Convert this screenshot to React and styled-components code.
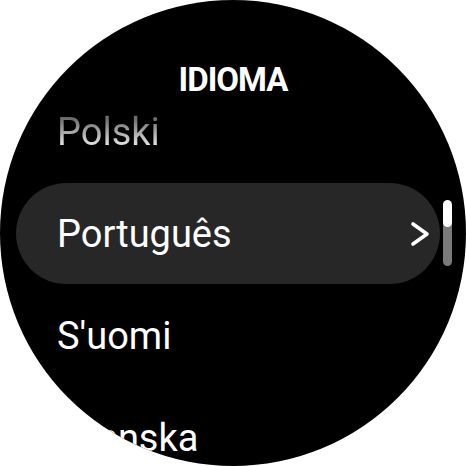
import React from 'react';
import styled, { createGlobalStyle } from 'styled-components';

const GlobalStyle = createGlobalStyle`
  html, body {
    margin: 0;
    padding: 0;
    background: #ffffff;
  }
  body {
    font-family: Roboto, "Noto Sans", "Liberation Sans", sans-serif;
  }
`;

const Watch = styled.div`
  position: relative;
  width: 466px;
  height: 466px;
  border-radius: 50%;
  background: #000;
  overflow: hidden;
  color: #fff;
  display: flex;
  flex-direction: column;
`;

const Title = styled.div`
  box-sizing: border-box;
  height: 81px;
  padding-top: 63px;
  text-align: center;
  font-size: 33px;
  line-height: 33px;
  font-weight: 700;
  letter-spacing: -1px;
`;

const List = styled.div`
  display: flex;
  flex-direction: column;
  gap: 1px;
  padding: 0 26px 0 16px;
`;

const Row = styled.div`
  box-sizing: border-box;
  height: 101px;
  flex-shrink: 0;
  display: flex;
  align-items: center;
  justify-content: space-between;
  padding: 0 9px 0 41px;
  border-radius: 51px;
  background: ${(p) => (p.$active ? '#272727' : 'transparent')};
`;

const Label = styled.span`
  font-size: 38px;
  line-height: 46px;
  font-weight: 400;
  color: #fff;
  ${(p) =>
    p.$faded &&
    `
    background: linear-gradient(180deg, #6a6a6a 20%, #e6e6e6 80%);
    -webkit-background-clip: text;
    background-clip: text;
    color: transparent;
  `}
`;

const Scrollbar = styled.div`
  position: absolute;
  left: 443px;
  top: 200px;
  width: 9px;
  height: 66px;
  border-radius: 5px;
  background: #7a7a7a;
  overflow: hidden;

  &::before {
    content: '';
    display: block;
    height: 27px;
    border-radius: 5px;
    background: #fff;
  }
`;

const Chevron = () => (
  <svg width="22" height="28" viewBox="0 0 22 28" fill="none">
    <polyline
      points="4,4 18,14 4,24"
      stroke="#fff"
      strokeWidth="3.6"
      strokeLinecap="round"
      strokeLinejoin="round"
    />
  </svg>
);

const languages = [
  { name: 'Polski', faded: true },
  { name: 'Português', active: true },
  { name: "S'uomi" },
  { name: 'Svenska' },
];

export default function App() {
  return (
    <>
      <GlobalStyle />
      <Watch>
        <Title>IDIOMA</Title>
        <List>
          {languages.map((l) => (
            <Row key={l.name} $active={l.active}>
              <Label $faded={l.faded}>{l.name}</Label>
              {l.active && <Chevron />}
            </Row>
          ))}
        </List>
        <Scrollbar />
      </Watch>
    </>
  );
}
